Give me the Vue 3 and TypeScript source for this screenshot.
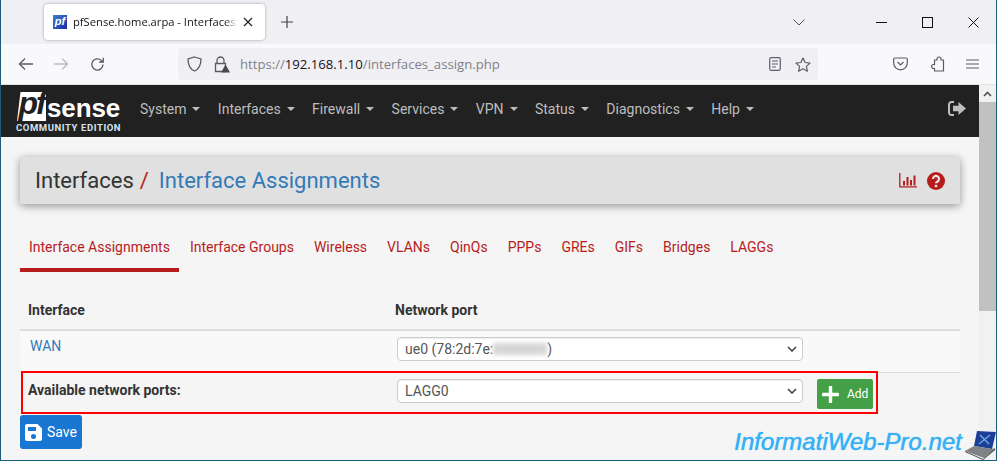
<script setup lang="ts">
const navItems: string[] = ['System', 'Interfaces', 'Firewall', 'Services', 'VPN', 'Status', 'Diagnostics', 'Help']
const tabs: string[] = ['Interface Assignments', 'Interface Groups', 'Wireless', 'VLANs', 'QinQs', 'PPPs', 'GREs', 'GIFs', 'Bridges', 'LAGGs']
</script>

<template>
  <div class="window">
    <div class="tabstrip">
      <div class="tab">
        <span class="favicon">pf</span>
        <span class="tab-title">pfSense.home.arpa - Interfaces:</span>
        <svg class="tab-x" width="10" height="10" viewBox="0 0 10 10"><path d="M1 1l8 8M9 1l-8 8" stroke="#222" stroke-width="1.2" fill="none"/></svg>
      </div>
      <svg class="new-tab" width="12" height="12" viewBox="0 0 12 12"><path d="M6 0v12M0 6h12" stroke="#444" stroke-width="1.2" fill="none"/></svg>
      <div class="strip-right">
        <svg class="tab-list" width="12" height="7" viewBox="0 0 12 7"><path d="M.5.5L6 6 11.5.5" stroke="#555" stroke-width="1" fill="none"/></svg>
        <div class="win-btns">
          <svg width="11" height="11" viewBox="0 0 11 11"><path d="M0 5.5h11" stroke="#111" stroke-width="1" fill="none"/></svg>
          <svg width="11" height="11" viewBox="0 0 11 11"><rect x=".5" y=".5" width="10" height="10" stroke="#111" fill="none"/></svg>
          <svg width="11" height="11" viewBox="0 0 11 11"><path d="M.5.5l10 10M10.5 .5l-10 10" stroke="#111" stroke-width="1" fill="none"/></svg>
        </div>
      </div>
    </div>

    <div class="toolbar">
      <svg class="tool back" width="16" height="14" viewBox="0 0 16 14"><path d="M15 7H1.5M7 1.5L1.500 7 7 12.5" stroke="#5b5b66" stroke-width="1.3" fill="none"/></svg>
      <svg class="tool fwd" width="16" height="14" viewBox="0 0 16 14"><path d="M1 7h13.5M9 1.5L14.500 7 9 12.5" stroke="#b9b9c0" stroke-width="1.3" fill="none"/></svg>
      <svg class="tool reload" width="15" height="15" viewBox="0 0 15 15"><path d="M13 7.500A5.600 5.600 0 1 1 11.300 3.400L13.200 5M13.300 .8V5H9.100" stroke="#5b5b66" stroke-width="1.3" fill="none"/></svg>
      <div class="urlbar">
        <svg class="shield" width="15" height="16" viewBox="0 0 15 16"><path d="M7.500 1L14 3c0 6-1.500 10-6.500 12C2.500 13 1 9 1 3z" stroke="#5b5b66" stroke-width="1.3" fill="none"/></svg>
        <svg class="lock" width="16" height="17" viewBox="0 0 16 17"><path d="M3 7V4.500a3.500 3.500 0 0 1 7 0V7M1.500 7.500h10v8h-10z" stroke="#5b5b66" stroke-width="1.3" fill="none"/><path d="M11.500 8.500L16 16.500H7z" fill="#4a4a52"/></svg>
        <span class="url"><span class="dim">https://</span>192.168.1.10<span class="dim">/interfaces_assign.php</span></span>
        <svg class="reader" width="12" height="14" viewBox="0 0 12 14"><rect x=".7" y=".7" width="10.600" height="12.600" rx="1.5" stroke="#5b5b66" stroke-width="1.2" fill="none"/><path d="M3 4h6M3 7h6M3 10h4" stroke="#5b5b66" stroke-width="1.2"/></svg>
        <svg class="star" width="16" height="15" viewBox="0 0 16 15"><path d="M8 1l2.100 4.500 4.900.6-3.600 3.300 1 4.800L8 11.800l-4.400 2.400 1-4.800L1 6.100l4.900-.6z" stroke="#5b5b66" stroke-width="1.2" fill="none" stroke-linejoin="round"/></svg>
      </div>
      <svg class="pocket" width="15" height="14" viewBox="0 0 15 14"><path d="M2 1h11a1.300 1.300 0 0 1 1.300 1.300V6a6.800 6.800 0 0 1-13.600 0V2.300A1.300 1.300 0 0 1 2 1z" stroke="#5b5b66" stroke-width="1.2" fill="none"/><path d="M4.500 5L7.500 8l3-3" stroke="#5b5b66" stroke-width="1.2" fill="none"/></svg>
      <svg class="ext" width="15" height="16" viewBox="0 0 15 16"><path d="M4.500 4H7.100A2.100 2.100 0 1 1 10.900 4H13.500V15H4.500V12.300A2 2 0 1 1 4.500 8.700Z" stroke="#5b5b66" stroke-width="1.2" fill="none" stroke-linejoin="round"/></svg>
      <svg class="menu" width="13" height="10" viewBox="0 0 13 10"><path d="M0 1h13M0 5h13M0 9h13" stroke="#5b5b66" stroke-width="1.1"/></svg>
    </div>

    <div class="page">
      <div class="viewport">
        <header class="navbar">
          <div class="logo">
            <div class="logo-top">
              <span class="pf">pf</span><span class="sense">sense</span>
            </div>
            <div class="edition">COMMUNITY EDITION</div>
          </div>
          <nav class="nav">
            <a v-for="item in navItems" :key="item" class="nav-item">{{ item }}<i class="caret"></i></a>
          </nav>
          <svg class="logout" width="18" height="15" viewBox="0 0 18 15"><path d="M6 1H3.500A2.500 2.500 0 0 0 1 3.500v8A2.500 2.500 0 0 0 3.500 14H6" stroke="#bdbdbd" stroke-width="2" fill="none"/><path d="M10.500 1L18 7.500 10.500 14v-3.700H5V4.700h5.500z" fill="#bdbdbd"/></svg>
        </header>

        <main class="content">
          <div class="panel">
            <h1 class="crumbs"><span class="crumb-root">Interfaces</span><span class="slash">/</span><a class="crumb-link">Interface Assignments</a></h1>
            <div class="panel-icons">
              <svg width="18" height="15" viewBox="0 0 18 15"><path d="M.8 0v13.800H18" stroke="#b71c1c" stroke-width="1.3" fill="none"/><path d="M4 8h2v4.500H4zM7.500 4h2v8.500h-2zM11 7h2v5.500h-2zM14.500 2.500h2v10h-2z" fill="#b71c1c"/></svg>
              <svg width="18" height="18" viewBox="0 0 18 18"><circle cx="9" cy="9" r="9" fill="#b71c1c"/><path d="M6 7a3 3 0 1 1 4.600 2.500C9.500 10.200 9 10.600 9 11.300" stroke="#f1e2e2" stroke-width="2.2" fill="none"/><rect x="7.800" y="12.800" width="2.400" height="2.400" fill="#f1e2e2"/></svg>
            </div>
          </div>

          <ul class="tabs">
            <li v-for="(t, i) in tabs" :key="t" class="tab-link" :class="{ active: i === 0 }">{{ t }}</li>
          </ul>

          <div class="table">
            <div class="row head">
              <div class="c1"><b>Interface</b></div>
              <div class="c2"><b>Network port</b></div>
            </div>
            <div class="row wan">
              <div class="c1"><a class="wan-link">WAN</a></div>
              <div class="c2">
                <div class="select"><span>ue0 (78:2d:7e:</span><span class="blur"></span><span>)</span><svg class="chev" width="10" height="6" viewBox="0 0 10 6"><path d="M1 1l4 4 4-4" stroke="#444" stroke-width="1.6" fill="none"/></svg></div>
              </div>
            </div>
            <div class="row avail">
              <div class="c1"><b>Available network ports:</b></div>
              <div class="c2">
                <div class="select"><span>LAGG0</span><svg class="chev" width="10" height="6" viewBox="0 0 10 6"><path d="M1 1l4 4 4-4" stroke="#444" stroke-width="1.6" fill="none"/></svg></div>
                <button class="add"><svg width="17" height="17" viewBox="0 0 17 17"><path d="M8.500 1v15M1 8.500h15" stroke="#fff" stroke-width="3.4" stroke-linecap="round"/></svg><span>Add</span></button>
              </div>
            </div>
            <div class="highlight"></div>
          </div>

          <button class="save">
            <svg width="17" height="17" viewBox="0 0 17 17"><path fill-rule="evenodd" d="M2 0h10.500L17 4.500V15a2 2 0 0 1-2 2H2a2 2 0 0 1-2-2V2a2 2 0 0 1 2-2zM3 3v4h8V3zm5.500 7a2.500 2.500 0 1 0 0 5 2.500 2.500 0 0 0 0-5z" fill="#fff"/></svg>
            <span>Save</span>
          </button>
        </main>
      </div>
      <div class="scrollbar">
        <svg width="9" height="6" viewBox="0 0 9 6"><path d="M1 5l3.500-3.500L8 5" stroke="#555" stroke-width="1.7" fill="none"/></svg>
        <div class="thumb"></div>
      </div>
      <div class="watermark">
        <span>InformatiWeb-Pro.net</span>
        <svg width="31" height="29" viewBox="0 0 31 29"><path d="M12 0l19 1-4 17-18-3z" fill="#1c3f96"/><path d="M15 4l9 9M25 4l-11 9" stroke="#6fa4e0" stroke-width="1.5"/><path d="M9 15l18 3 3-1-11 10L0 20z" fill="#808285"/><path d="M0 20l18 8 12-11v2L18 29 0 21z" fill="#4b4d50"/></svg>
      </div>
    </div>
  </div>
</template>

<style>
html, body { margin: 0; padding: 0; overflow: hidden; }
</style>

<style scoped>
.window {
  width: 997px; height: 461px; box-sizing: border-box;
  border: 1px solid #1b5c78; border-top: 0;
  display: flex; flex-direction: column; overflow: hidden;
  font-family: Roboto, sans-serif; background: #f5f5f5;
}
svg { display: block; flex: none; }

.tabstrip { height: 44px; flex: none; background: #f0f0f4; display: flex; align-items: center; box-sizing: border-box; padding-left: 43px; }
.tab {
  width: 221px; height: 36px; box-sizing: border-box; background: #fff; border-radius: 4px;
  box-shadow: 0 0 3px rgba(0,0,0,.35); display: flex; align-items: center; padding: 0 0 0 9px;
}
.favicon {
  width: 14px; height: 14px; flex: none; background: linear-gradient(135deg, #3f7fd1, #1b2aa5); color: #fff;
  font: italic 700 11px/13px "Liberation Sans", sans-serif; text-align: center;
}
.tab-title {
  width: 165px; margin-left: 6px; white-space: nowrap; overflow: visible;
  font: 11.2px/16px "Open Sans", sans-serif; color: #15141a; clip-path: inset(0);
  -webkit-mask-image: linear-gradient(to right, #000 92%, transparent);
  mask-image: linear-gradient(to right, #000 92%, transparent);
}
.tab-x { margin-left: 5px; }
.new-tab { margin-left: 16px; }
.strip-right { margin-left: auto; display: flex; align-items: center; }
.tab-list { margin-right: 71px; }
.win-btns { display: flex; gap: 35px; padding-right: 17px; align-items: center; }

.toolbar { height: 41px; flex: none; background: #f9f9fb; display: flex; align-items: center; padding-left: 17px; box-sizing: border-box; border-bottom: 1px solid #e4e4e8; }
.fwd { margin-left: 19px; }
.reload { margin-left: 21px; }
.urlbar {
  width: 640px; height: 32px; margin-left: 73px; background: #f0f0f4; border-radius: 4px;
  display: flex; align-items: center; box-sizing: border-box; padding-left: 9px;
}
.lock { margin-left: 12px; }
.url { margin-left: 10px; font: 13.15px/18px "Open Sans", sans-serif; color: #15141a; white-space: nowrap; width: 523px; }
.dim { color: #80808a; }
.reader { margin-left: 6px; }
.star { margin-left: 14px; }
.pocket { margin-left: 75px; }
.ext { margin-left: 22px; }
.menu { margin-left: 21px; }

.page { flex: 1; min-height: 0; display: flex; position: relative; }
.viewport { flex: 1; min-width: 0; }
.navbar { height: 52px; background: #212121; display: flex; align-items: center; box-sizing: border-box; padding-left: 14px; position: relative; }
.logo { width: 108px; flex: none; height: 48px; }
.logo-top { display: flex; align-items: flex-end; height: 34px; padding: 3px 0 0 2px; box-sizing: border-box; }
.pf {
  position: relative; z-index: 0; width: 29px; height: 29px; color: #212121;
  font: italic 700 32px/23px "Liberation Sans", sans-serif; text-align: center; letter-spacing: -2px;
}
.pf::before {
  content: ""; position: absolute; inset: 0; z-index: -1; background: #fff;
  clip-path: polygon(12% 0, 100% 0, 100% 100%, 0 100%);
}
.sense { font: 700 26px/24px "Liberation Sans", sans-serif; color: #fff; margin: 0 0 1px 1px; letter-spacing: -.1px; }
.edition { font: 700 9.5px/12px Roboto, sans-serif; color: #d6e3ee; letter-spacing: .58px; white-space: nowrap; margin: 1px 0 0 1px; }
.nav { display: flex; margin-left: 17px; gap: 17.4px; margin-top: -5px; }
.nav-item { font-size: 14px; color: #bdbdbd; white-space: nowrap; display: flex; align-items: center; }
.caret { width: 0; height: 0; margin-left: 6px; border-left: 4px solid transparent; border-right: 4px solid transparent; border-top: 4px solid #bdbdbd; }
.logout { position: absolute; right: 13px; top: 16px; }

.content { padding: 20px 19px 0 19px; }
.panel {
  height: 47px; background: #e0e0e0; box-shadow: 0 2px 8px rgba(0,0,0,.4); border-radius: 2px;
  display: flex; align-items: center; justify-content: space-between; padding: 0 15px;
}
.crumbs { margin: 0; font-weight: 400; font-size: 22px; line-height: 30px; color: #333; display: flex; align-items: center; }
.slash { color: #b71c1c; margin-left: 6px; margin-right: 10px; }
.crumb-link { color: #337ab7; }
.panel-icons { display: flex; align-items: center; gap: 10px; }

.tabs { list-style: none; margin: 26px 0 0; padding: 0; display: flex; gap: 2px; }
.tab-link { padding: 0 9px; height: 42px; line-height: 34px; font-size: 14px; color: #b71c1c; white-space: nowrap; box-sizing: border-box; }
.tab-link.active { border-bottom: 4px solid #b71c1c; }

.table { margin-top: 19px; position: relative; }
.row { display: flex; font-size: 14px; color: #333; }
.c1 { width: 375px; flex: none; padding-left: 8px; box-sizing: border-box; }
.c2 { flex: 1; display: flex; align-items: flex-start; padding-left: 2px; }
.head { height: 38px; line-height: 20px; border-bottom: 2px solid #ddd; align-items: flex-start; }
.head .c1, .head .c2 { padding-top: 9px; }
.head .c2 { padding-left: 0; }
.wan { height: 41px; background: #f9f9f9; border-bottom: 1px solid #ddd; }
.wan-link { color: #337ab7; display: block; margin: 5px 0 0 2px; line-height: 20px; }
.wan .c2 { padding-top: 6px; }
.avail { height: 40px; }
.avail .c1 { padding-top: 7px; line-height: 20px; }
.avail .c2 { padding-top: 6px; }
.select {
  width: 406px; height: 24px; background: #fff; border: 1px solid #ccc; border-radius: 4px; box-sizing: border-box;
  display: flex; align-items: center; padding-left: 7px; position: relative; font-size: 14px; color: #555; box-shadow: inset 0 1px 1px rgba(0,0,0,.075);
}
.blur { width: 54px; height: 12px; background: #d6d6d6; filter: blur(2px); }
.chev { position: absolute; right: 5px; top: 8px; }
.add {
  margin-left: 14px; width: 56px; height: 30px; background: #43a047; border: 0; border-radius: 2px; color: #fff;
  display: flex; align-items: center; gap: 8px; padding: 0 0 0 5px; font: 12px Roboto, sans-serif;
}
.highlight { position: absolute; left: 1px; right: 82px; top: 80px; height: 43px; border: 2px solid #f00; box-sizing: border-box; pointer-events: none; }
.save {
  margin-top: 2px; width: 62px; height: 34px; background: #1976d2; border: 0; border-radius: 3px; color: #fff;
  display: flex; align-items: center; gap: 5px; padding: 0 0 0 5px; font: 14px Roboto, sans-serif;
}
.scrollbar { width: 17px; flex: none; background: #f1f1f1; display: flex; flex-direction: column; align-items: center; }
.scrollbar svg { margin-top: 6px; }
.thumb { width: 17px; height: 209px; background: #c1c1c1; margin-top: 5px; }
.watermark { position: absolute; right: 0; bottom: 0; display: flex; align-items: flex-end; gap: 3px; }
.watermark span { font: italic 400 24px/30px "Liberation Sans", sans-serif; color: #35b0f5; margin-bottom: 3px; text-shadow: 0 0 1px #35b0f5; white-space: nowrap; }
</style>
